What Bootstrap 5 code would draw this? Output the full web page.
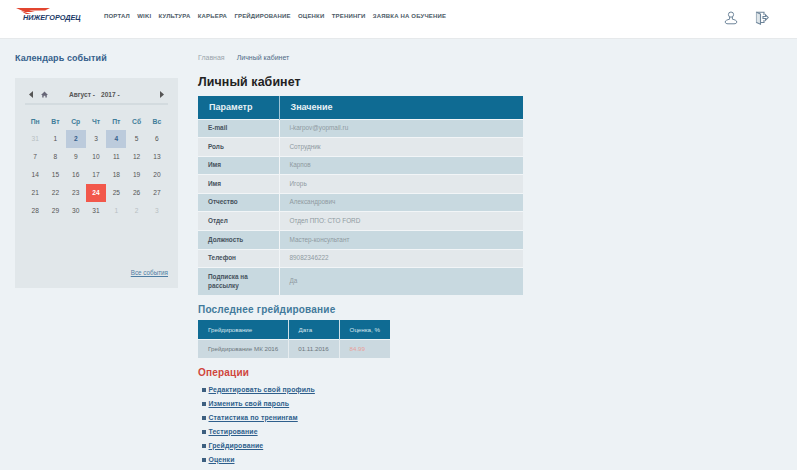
<!DOCTYPE html>
<html lang="ru"><head><meta charset="utf-8">
<link href="https://cdn.jsdelivr.net/npm/bootstrap@5.3.0/dist/css/bootstrap.min.css" rel="stylesheet">
<style>
html,body{height:470px;overflow:hidden}
body{background:#edf2f5;font-family:"Liberation Sans",Arial,sans-serif;color:#333}
.topbar{height:39px;background:#fff;border-bottom:1px solid #e6e9eb;padding-left:16px;padding-right:29px}
.logo{width:65px;height:20px;position:relative;margin-right:23px;margin-top:-3px}
.logo svg{position:absolute;left:0;top:0}
.logo span{position:absolute;left:7px;top:5px;font:italic 700 7.3px/10px "Liberation Sans",sans-serif;color:#1c3a68;letter-spacing:-.05px;white-space:nowrap}
.menu{gap:7.3px;margin-top:-5px}
.menu a{font-size:6px;font-weight:700;letter-spacing:.18px;color:#4c5a66;text-decoration:none;white-space:nowrap}
.icons{gap:17px;margin-top:-3px;transform:translateX(1px)}
.shell{padding-left:15px}
.side{width:163px;margin-right:20px}
.side h2{font-size:9px;font-weight:700;color:#35608c;margin:13px 0 14px;line-height:12px;letter-spacing:.1px}
.calbox{background:#e1e7ea;height:210px;padding:8px 10px 0;position:relative}
.calhead{height:19px;border-bottom:2px solid #d3dbdf;font-size:6.6px;font-weight:700;color:#555;padding:0 4px}
.calhead .mid{margin-left:21px;gap:6px}
.calgrid{display:grid;grid-template-columns:repeat(7,20.3px);margin-top:9px;font-size:6.6px;text-align:center;color:#555}
.calgrid>div{height:18.2px;line-height:18px}
.calgrid .dow{font-weight:700;color:#3f7d99;font-size:6.8px;height:15.5px;line-height:16px}
.calgrid .dim{color:#b8bfc3}
.calgrid .ev{background:#bccbdc;color:#35608c;font-weight:700}
.calgrid .now{background:#f2584b;color:#fff;font-weight:700}
.calall{position:absolute;right:10px;bottom:11px;font-size:6.3px;color:#4e7ea3}
.main{width:325px}
.crumbs{font-size:7px;margin-top:14px;line-height:9px;color:#9aa4ab}
.crumbs span{color:#4f6b85;margin-left:12px}
.main h1{font-size:12.4px;font-weight:700;color:#222;margin:12px 0 6px;line-height:16px;letter-spacing:.1px}
.ptable{width:325px;border-collapse:collapse;font-size:6.4px;table-layout:fixed}
.ptable th{background:#0f6b93;color:#e8f1f5;font-size:9px;height:23px;padding:0 11px;border-right:1px solid #9dc4d6}
.ptable th:last-child{border-right:0}
.ptable td{height:18.6px;padding:0 10px;line-height:8.4px;border-top:1px solid #f2f5f7;border-right:1px solid #f2f5f7;color:#8f9aa1}
.ptable td:first-child{font-weight:700;color:#46525c;width:81px}
.ptable td:last-child{border-right:0}
.ptable tr:nth-child(odd) td{background:#c8d9e0}
.ptable tr:nth-child(even) td{background:#e3e8eb}
.ptable tr.tall td{height:27px}
.sub{font-size:10px;font-weight:700;color:#427a9b;margin:8px 0 4px;line-height:13px;letter-spacing:.2px}
.gtable{width:192px;border-collapse:collapse;font-size:6.2px;table-layout:fixed;white-space:nowrap}
.gtable th{background:#0f6b93;color:#d7e6ee;font-weight:400;height:20px;border-right:1px solid #cfe0e8;padding:0 10px}
.gtable td{background:#cbd9e0;height:18px;padding:0 10px;color:#6b767d;border-top:1px solid #eef3f5;border-right:1px solid #e6ecef}
.gtable .c{text-align:center;padding:0 4px}
.gtable th:last-child,.gtable td:last-child{border-right:0}
.gtable .score{color:#e8a09a}
.ops{font-size:10px;font-weight:700;color:#d0463c;margin:8px 0 4px;line-height:13px;letter-spacing:.2px}
.oplist{list-style:none;padding:0 0 0 4px;margin:0}
.oplist li{height:14px;font-size:6.9px;line-height:14px;display:flex;align-items:center;gap:3px}
.oplist li::before{content:"";width:3.5px;height:3.5px;background:#3d5f7f}
.oplist a{color:#2e5f8c;font-weight:700;letter-spacing:.12px}
</style></head><body>
<header class="topbar d-flex align-items-center">
 <div class="logo">
  <svg width="40" height="12" viewBox="0 0 40 12"><path d="M0 0H34L29 2.5H13L19 4H9Z" fill="#e2452f"/><path d="M5 3 15 6H10Z" fill="#e2452f"/></svg>
  <span>НИЖЕГОРОДЕЦ</span>
 </div>
 <nav class="menu d-flex align-items-center">
  <a href="#">ПОРТАЛ</a><a href="#">WIKI</a><a href="#">КУЛЬТУРА</a><a href="#">КАРЬЕРА</a><a href="#">ГРЕЙДИРОВАНИЕ</a><a href="#">ОЦЕНКИ</a><a href="#">ТРЕНИНГИ</a><a href="#">ЗАЯВКА НА ОБУЧЕНИЕ</a>
 </nav>
 <div class="icons d-flex align-items-center ms-auto">
  <svg width="14" height="14" viewBox="0 0 14 14" fill="none" stroke="#6d8499" stroke-width="1"><circle cx="7" cy="3.6" r="2.6"/><path d="M5.6 6V8.2C3.5 8.8 1.2 9.3 1.2 11 1.2 12.2 2.5 12.8 4 12.8H10C11.5 12.8 12.8 12.2 12.8 11 12.8 9.3 10.5 8.8 8.4 8.2V6"/></svg>
  <svg width="14" height="14" viewBox="0 0 14 14" fill="none" stroke="#6d8499" stroke-width="1.1"><path d="M9 4V1.2H1.5V11.5H9V9"/><path d="M1.5 1.2 5.5 3V13.2L1.5 11.5" fill="#dfe6ea"/><path d="M8 5.5H10.5V3.8L13.2 6.5 10.5 9.2V7.5H8Z"/></svg>
 </div>
</header>
<div class="shell d-flex align-items-start">
 <aside class="side">
  <h2>Календарь событий</h2>
  <div class="calbox">
   <div class="calhead d-flex align-items-center">
    <svg width="4" height="7" viewBox="0 0 4 7"><path d="M4 0V7L0 3.5Z" fill="#555"/></svg>
    <svg class="ms-2" width="7" height="7" viewBox="0 0 8 7"><path d="M4 0 8 4H6.6V7H5V5H3V7H1.4V4H0Z" fill="#667"/></svg>
    <div class="mid d-flex"><span>Август -</span><span>2017 -</span></div>
    <svg class="ms-auto" width="4" height="7" viewBox="0 0 4 7"><path d="M0 0V7L4 3.5Z" fill="#555"/></svg>
   </div>
   <div class="calgrid">
    <div class="dow">Пн</div><div class="dow">Вт</div><div class="dow">Ср</div><div class="dow">Чт</div><div class="dow">Пт</div><div class="dow">Сб</div><div class="dow">Вс</div>
    <div class="dim">31</div><div>1</div><div class="ev">2</div><div>3</div><div class="ev">4</div><div>5</div><div>6</div>
    <div>7</div><div>8</div><div>9</div><div>10</div><div>11</div><div>12</div><div>13</div>
    <div>14</div><div>15</div><div>16</div><div>17</div><div>18</div><div>19</div><div>20</div>
    <div>21</div><div>22</div><div>23</div><div class="now">24</div><div>25</div><div>26</div><div>27</div>
    <div>28</div><div>29</div><div>30</div><div>31</div><div class="dim">1</div><div class="dim">2</div><div class="dim">3</div>
   </div>
   <a class="calall" href="#">Все события</a>
  </div>
 </aside>
 <main class="main">
  <div class="crumbs">Главная<span>Личный кабинет</span></div>
  <h1>Личный кабинет</h1>
  <table class="ptable">
   <thead><tr><th style="width:81px">Параметр</th><th>Значение</th></tr></thead>
   <tbody>
    <tr><td>E-mail</td><td>i-karpov@yopmail.ru</td></tr>
    <tr><td>Роль</td><td>Сотрудник</td></tr>
    <tr><td>Имя</td><td>Карпов</td></tr>
    <tr><td>Имя</td><td>Игорь</td></tr>
    <tr><td>Отчество</td><td>Александрович</td></tr>
    <tr><td>Отдел</td><td>Отдел ППО: СТО FORD</td></tr>
    <tr><td>Должность</td><td>Мастер-консультант</td></tr>
    <tr><td>Телефон</td><td>89082346222</td></tr>
    <tr class="tall"><td>Подписка на рассылку</td><td>Да</td></tr>
   </tbody>
  </table>
  <h3 class="sub">Последнее грейдирование</h3>
  <table class="gtable">
   <thead><tr><th style="width:90px">Грейдирование</th><th style="width:51px">Дата</th><th class="c">Оценка, %</th></tr></thead>
   <tbody><tr><td>Грейдирование МК 2016</td><td class="c">01.11.2016</td><td class="score">84.99</td></tr></tbody>
  </table>
  <h3 class="ops">Операции</h3>
  <ul class="oplist">
   <li><a href="#">Редактировать свой профиль</a></li>
   <li><a href="#">Изменить свой пароль</a></li>
   <li><a href="#">Статистика по тренингам</a></li>
   <li><a href="#">Тестирование</a></li>
   <li><a href="#">Грейдирование</a></li>
   <li><a href="#">Оценки</a></li>
  </ul>
 </main>
</div>
<script src="https://cdn.jsdelivr.net/npm/bootstrap@5.3.0/dist/js/bootstrap.bundle.min.js"></script>
</body></html>
